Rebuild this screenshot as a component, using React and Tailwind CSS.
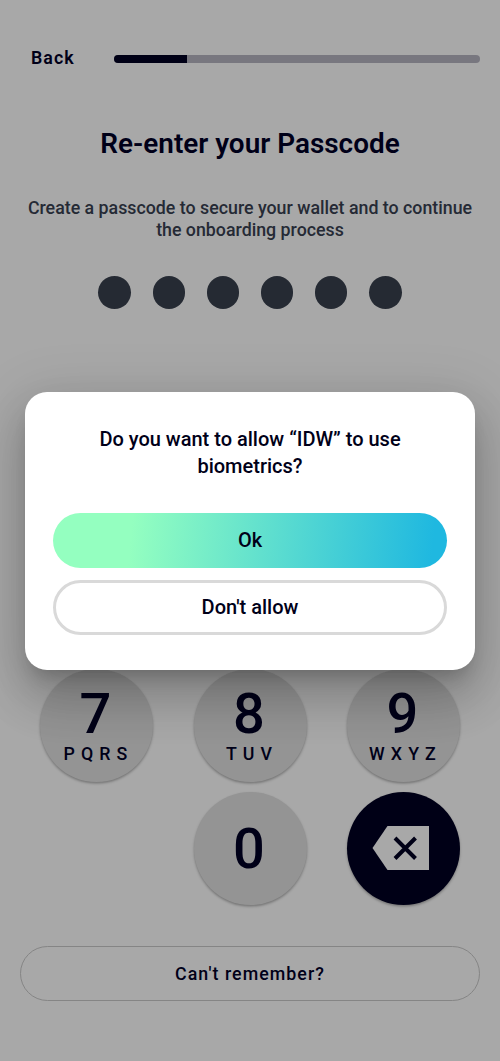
import React from "react";

const keyBase =
  "flex h-[113px] w-[113px] flex-col items-center rounded-full shadow-[0_1.5px_2.5px_rgba(0,0,0,0.3)]";

function Key({ digit, letters }) {
  return (
    <button className={`${keyBase} bg-[#949494]`}>
      <span className={`${letters ? "mt-[15px]" : "mt-[27px]"} pr-[2px] text-[56px] leading-[60px] font-medium`}>
        {digit}
      </span>
      {letters && (
        <span className="pl-[4px] text-[17.8px] leading-[20px] font-medium tracking-[6.1px] whitespace-nowrap">
          {letters}
        </span>
      )}
    </button>
  );
}

function BackspaceKey() {
  return (
    <button aria-label="Delete" className={`${keyBase} justify-center bg-[#000016]`}>
      <svg width="58" height="44" viewBox="0 0 58 44" className="mr-[5px] mb-[1px]">
        <path d="M15.5 0H57V44H15.5L0.5 22Z" fill="#a8a8a8" />
        <path d="M23 12L43.5 32.5M43.5 12L23 32.5" stroke="#000016" strokeWidth="4" fill="none" />
      </svg>
    </button>
  );
}

function BiometricsDialog() {
  return (
    <div className="absolute inset-0 flex flex-col items-center overflow-hidden pt-[391.7px]">
      <div
        role="dialog"
        className="flex h-[278px] w-[450px] flex-col rounded-[22px] bg-white px-[28px] pt-[34.3px] text-[20px] font-medium shadow-[0_13px_18px_-8px_rgba(0,0,0,0.2),0_29px_45px_4px_rgba(0,0,0,0.14),0_11px_55px_10px_rgba(0,0,0,0.12)]"
      >
        <h2 className="text-center leading-[27px]">
          Do you want to allow “IDW” to use
          <br />
          biometrics?
        </h2>
        <button className="mt-[33px] h-[55.4px] shrink-0 rounded-full bg-[linear-gradient(95deg,#94ffc0_20%,#1fb8e0_96%)] pb-[2px]">
          Ok
        </button>
        <button className="mt-[11.6px] h-[55px] shrink-0 rounded-full border-[3px] border-[#d9d9d9] pb-[0.6px]">
          Don't allow
        </button>
      </div>
    </div>
  );
}

export default function App() {
  return (
    <div className="relative h-[1061px] w-[500px] overflow-hidden bg-[#a8a8a8] font-['Roboto',sans-serif] text-[#000018]">
      <main className="flex h-full flex-col px-[20px]">
        <header className="flex h-[24px] mt-[46px] items-center">
          <button className="w-[94.3px] pl-[11px] text-left text-[17.8px] font-semibold tracking-[1.05px]">Back</button>
          <div className="mt-[1px] h-[8px] flex-1 overflow-hidden rounded-full bg-[#78777f]">
            <div className="h-full w-1/5 bg-[#000016]" />
          </div>
        </header>
        <h1 className="mt-[57px] text-center text-[27.9px] leading-[34px] font-semibold">Re-enter your Passcode</h1>
        <p className="-mx-[10px] mt-[36px] text-center text-[17.8px] leading-[22px] font-medium text-[#252a35]">
          Create a passcode to secure your wallet and to continue
          <br />
          the onboarding process
        </p>
        <div className="mt-[35.3px] flex justify-center gap-[21.8px]">
          {[0, 1, 2, 3, 4, 5].map((i) => (
            <span key={i} className="h-[32.4px] w-[32.4px] rounded-full bg-[#252a33]" />
          ))}
        </div>
        <div className="mt-[360.3px] grid grid-cols-[113px_113px_113px] justify-between gap-y-[10px] px-[20px]">
          <Key digit="7" letters="PQRS" />
          <Key digit="8" letters="TUV" />
          <Key digit="9" letters="WXYZ" />
          <span />
          <Key digit="0" />
          <BackspaceKey />
        </div>
        <button className="mt-[41px] h-[55px] shrink-0 rounded-full border border-[#858585] pt-[1.5px] text-[17.8px] font-medium tracking-[1.05px]">
          Can't remember?
        </button>
      </main>
      <BiometricsDialog />
    </div>
  );
}
